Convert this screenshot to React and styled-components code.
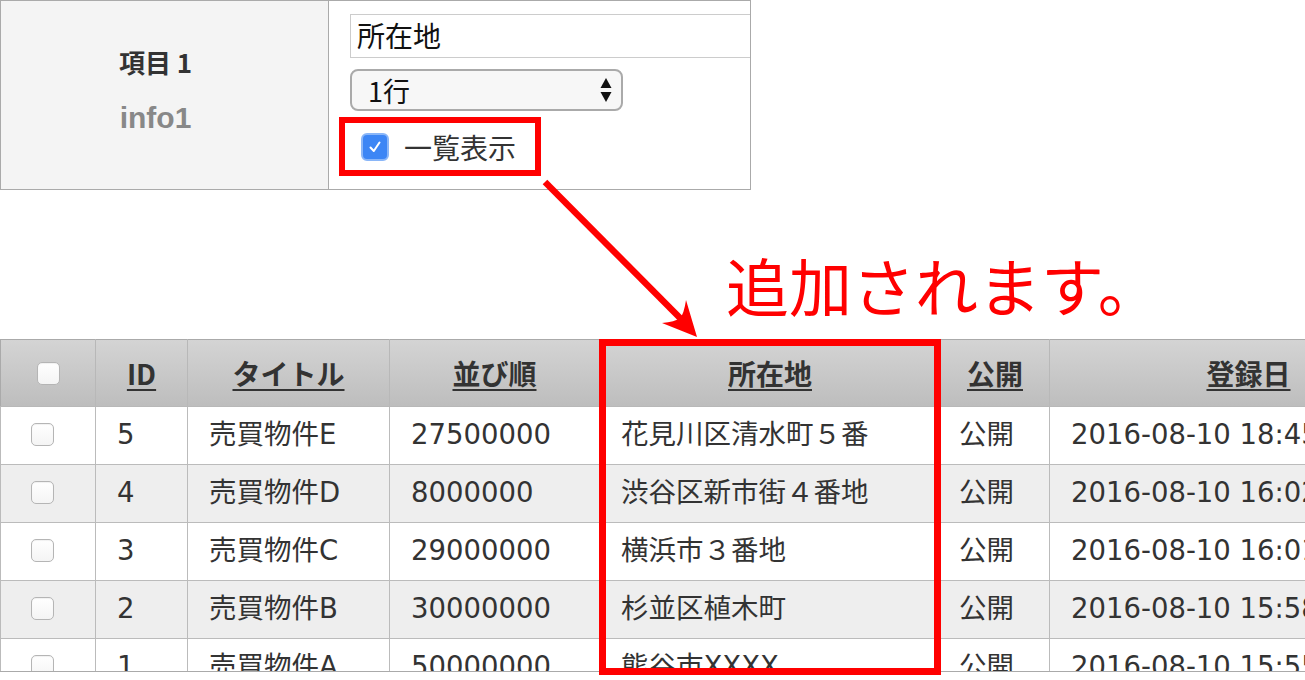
import React from 'react'
import styled, { createGlobalStyle } from 'styled-components'

const rows = [
    { id: 5, title: '売買物件E', order: '27500000', place: '花見川区清水町５番', pub: '公開', date: '2016-08-10 18:45:12' },
    { id: 4, title: '売買物件D', order: '8000000', place: '渋谷区新市街４番地', pub: '公開', date: '2016-08-10 16:02:40' },
    { id: 3, title: '売買物件C', order: '29000000', place: '横浜市３番地', pub: '公開', date: '2016-08-10 16:01:05' },
    { id: 2, title: '売買物件B', order: '30000000', place: '杉並区植木町', pub: '公開', date: '2016-08-10 15:58:31' },
    { id: 1, title: '売買物件A', order: '50000000', place: '熊谷市XXXX', pub: '公開', date: '2016-08-10 15:55:02' },
]

const columns = [
    { label: '', width: 95 },
    { label: 'ID', width: 92 },
    { label: 'タイトル', width: 202 },
    { label: '並び順', width: 210 },
    { label: '所在地', width: 341 },
    { label: '公開', width: 109 },
    { label: '登録日', width: 398 },
]

export default function App() {
    return (
        <>
            <GlobalStyle />
            <Page>
                <FormPanel>
                    <LabelCell>
                        <LabelTitle>項目 1</LabelTitle>
                        <LabelKey>info1</LabelKey>
                    </LabelCell>
                    <FieldCell>
                        <TextInput>所在地</TextInput>
                        <SelectBox>
                            <span>1行</span>
                            <svg width="12" height="26" viewBox="0 0 12 26">
                                <path d="M6 1 L11.5 11 L0.5 11 Z" fill="#111" />
                                <path d="M6 25 L11.5 15 L0.5 15 Z" fill="#111" />
                            </svg>
                        </SelectBox>
                        <CheckLabel>
                            <CheckedBox>
                                <svg width="16" height="16" viewBox="0 0 16 16">
                                    <path d="M3.5 8.5 L6.8 12 L12.5 3.5" stroke="#fff" strokeWidth="2" fill="none" strokeLinecap="round" strokeLinejoin="round" />
                                </svg>
                            </CheckedBox>
                            一覧表示
                        </CheckLabel>
                    </FieldCell>
                </FormPanel>

                <Callout>
                    <CalloutText>追加されます。</CalloutText>
                </Callout>

                <TableArea>
                    <TableWrap>
                        <Table>
                            <colgroup>
                                {columns.map((c, i) => (
                                    <col key={i} style={{ width: c.width }} />
                                ))}
                            </colgroup>
                            <thead>
                                <HeadRow>
                                    <HeadCell>
                                        <Box $head />
                                    </HeadCell>
                                    {columns.slice(1).map((c) => (
                                        <HeadCell key={c.label}>
                                            <SortLink>{c.label}</SortLink>
                                        </HeadCell>
                                    ))}
                                </HeadRow>
                            </thead>
                            <tbody>
                                {rows.map((r, i) => (
                                    <BodyRow key={r.id} $odd={i % 2 === 1}>
                                        <Cell $check>
                                            <Box />
                                        </Cell>
                                        <Cell>{r.id}</Cell>
                                        <Cell>{r.title}</Cell>
                                        <Cell>{r.order}</Cell>
                                        <Cell>{r.place}</Cell>
                                        <Cell $pad="18px">{r.pub}</Cell>
                                        <Cell>{r.date}</Cell>
                                    </BodyRow>
                                ))}
                            </tbody>
                        </Table>
                    </TableWrap>
                    <ColumnMark />
                </TableArea>

                <Arrow width="1305" height="680" viewBox="0 0 1305 680">
                    <line x1="545" y1="182" x2="684" y2="322" stroke="#ff0000" strokeWidth="6.5" />
                    <path d="M697 337 L686 300 Q684 314 680 318 Q675 322 662 323 Z" fill="#ff0000" />
                </Arrow>
            </Page>
        </>
    )
}

const GlobalStyle = createGlobalStyle`
    body {
        margin: 0;
        background: #fff;
        font-family: "DejaVu Sans", "Noto Sans CJK JP", sans-serif;
        color: #333;
    }
`

const Page = styled.div`
    position: relative;
    width: 1305px;
    height: 680px;
    overflow: hidden;
    background: #fff;
`

const FormPanel = styled.div`
    display: flex;
    width: 751px;
    height: 190px;
    box-sizing: border-box;
    border: 1px solid #aaa;
`

const LabelCell = styled.div`
    width: 328px;
    box-sizing: border-box;
    background: #f4f4f4;
    border-right: 1px solid #aaa;
    display: flex;
    flex-direction: column;
    align-items: center;
    justify-content: center;
    gap: 26px;
    padding: 0 18px 10px 0;
`

const LabelTitle = styled.div`
    font-family: "Noto Sans CJK JP", sans-serif;
    font-weight: 700;
    font-size: 26px;
    line-height: 30px;
    color: #333;
`

const LabelKey = styled.div`
    font-family: "Liberation Sans", "Noto Sans CJK JP", sans-serif;
    font-weight: 700;
    font-size: 30px;
    line-height: 30px;
    color: #888;
`

const FieldCell = styled.div`
    flex: 1;
    overflow: hidden;
    display: flex;
    flex-direction: column;
    padding: 13px 0 0 21px;
`

const TextInput = styled.div`
    width: 420px;
    height: 44px;
    box-sizing: border-box;
    border: 1px solid #ccc;
    padding: 0 6px;
    font-family: "Noto Sans CJK JP", sans-serif;
    font-size: 28px;
    line-height: 40px;
    color: #111;
`

const SelectBox = styled.div`
    margin-top: 11px;
    width: 273px;
    height: 42px;
    box-sizing: border-box;
    border: 2px solid #aaa;
    border-radius: 8px;
    background: #f7f7f7;
    display: flex;
    align-items: center;
    justify-content: space-between;
    padding: 0 9px 0 16px;
    font-family: "Noto Sans CJK JP", sans-serif;
    font-size: 27px;
    color: #111;
`

const CheckLabel = styled.div`
    margin: 6px 0 0 -11px;
    width: 202px;
    height: 59px;
    box-sizing: border-box;
    border: 6px solid #ff0000;
    display: flex;
    align-items: center;
    gap: 15px;
    padding-left: 16px;
    font-family: "Noto Sans CJK JP", sans-serif;
    font-size: 28px;
    color: #333;
`

const CheckedBox = styled.span`
    width: 28px;
    height: 28px;
    box-sizing: border-box;
    border-radius: 6px;
    background: #3d86f5;
    border: 2px solid #8ab6f8;
    display: flex;
    align-items: center;
    justify-content: center;
`

const Callout = styled.div`
    height: 149px;
    padding: 59px 0 0 726px;
    box-sizing: border-box;
`

const CalloutText = styled.div`
    font-family: "Noto Sans CJK JP", sans-serif;
    font-weight: 400;
    font-size: 63px;
    line-height: 70px;
    color: #ff0000;
    white-space: nowrap;
`

const TableArea = styled.div`
    position: relative;
`

const TableWrap = styled.div`
    height: 333px;
    overflow: hidden;
    border-bottom: 1px solid #aaa;
    box-sizing: border-box;
`

const Table = styled.table`
    table-layout: fixed;
    border-collapse: collapse;
    width: 1447px;
    font-size: 27.5px;
    color: #333;
`

const HeadRow = styled.tr`
    height: 67px;
    background: linear-gradient(#d4d4d4, #bdbdbd);
`

const HeadCell = styled.th`
    border: 1px solid #b8b8b8;
    border-top-color: #aaa;
    border-left-color: #c8c8c8;
    text-align: center;
    padding: 0;
    font-family: "Noto Sans CJK JP", sans-serif;
    font-weight: 700;
    font-size: 28px;
    &:first-child {
        border-left: 1px solid #aaa;
    }
`

const SortLink = styled.span`
    color: #333;
    text-decoration: underline;
    text-underline-offset: 4px;
    text-decoration-thickness: 2px;
`

const BodyRow = styled.tr`
    height: 58px;
    background: ${(p) => (p.$odd ? '#eeeeee' : '#ffffff')};
`

const Cell = styled.td`
    border: 1px solid #bbb;
    padding: 0 0 3px ${(p) => (p.$check ? '30px' : p.$pad || '21px')};
    white-space: nowrap;
    overflow: hidden;
    vertical-align: middle;
    line-height: 30px;
`

const Box = styled.span`
    display: block;
    width: 23px;
    height: 23px;
    margin-left: ${(p) => (p.$head ? '36px' : '0')};
    box-sizing: border-box;
    border: 1px solid #b5b5b5;
    border-radius: 5px;
    background: linear-gradient(#ffffff, #f4f4f4);
    box-shadow: inset 0 1px 1px rgba(0, 0, 0, 0.06);
`

const ColumnMark = styled.div`
    position: absolute;
    left: 599px;
    top: 0;
    width: 342px;
    height: 336px;
    box-sizing: border-box;
    border: 7px solid #ff0000;
    pointer-events: none;
`

const Arrow = styled.svg`
    position: absolute;
    left: 0;
    top: 0;
    pointer-events: none;
`
